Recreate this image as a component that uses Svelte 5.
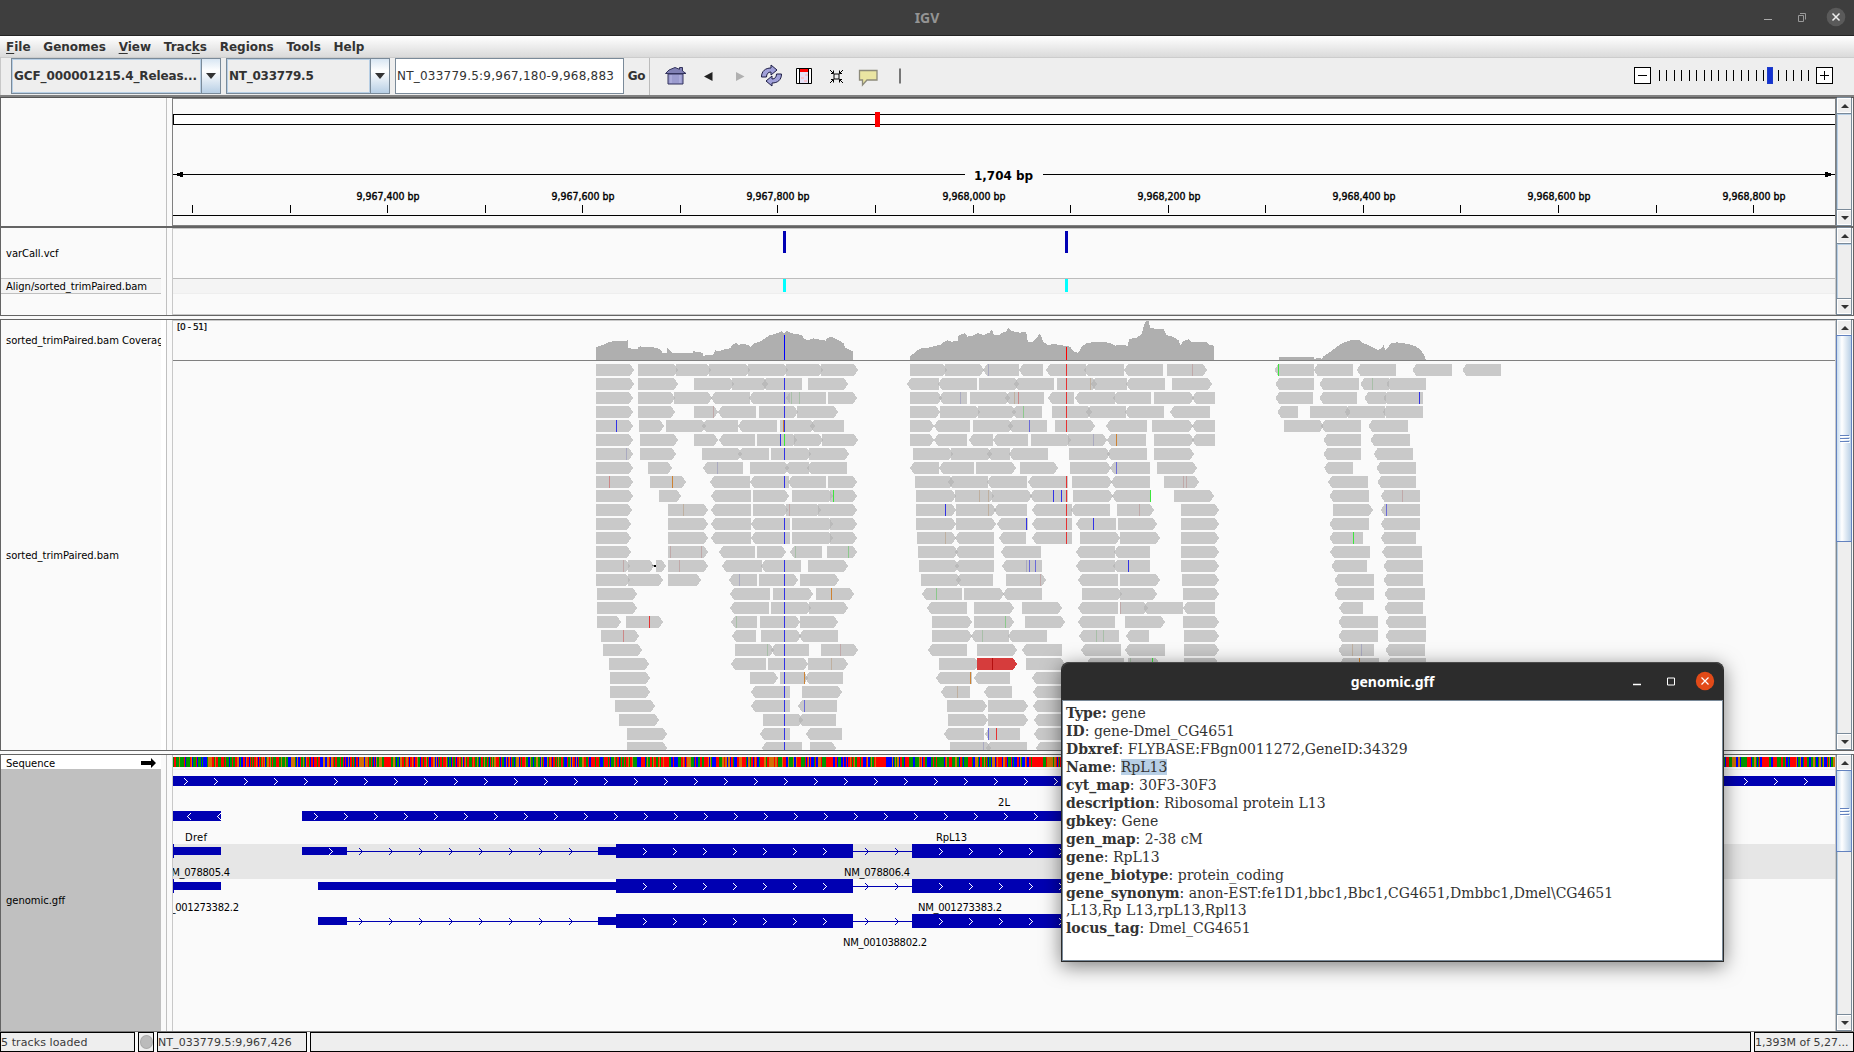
<script>
  // Alignment rows: "start>tip" is a forward read, "tip<end" a reverse read.
  const groups = [
    {
      origin: 580, scale: 3,
      rows: [
        '48>162 174>294 288>393 387>510 504>624 618>729 723>834',
        '48>162 174>294 342>462 456>564 546<666 684>804',
        '48>159 174>285 282>396 393<510 507<630 618<738 744>831',
        '48>159 174>285 342>414 414<528 537>654 651>774',
        '48>159 177>252 258>378 366<474 474<591 600>705 690<792',
        '48>159 180>294 342>414 417<525 531>651 642>729 726>834',
        '48>159 180>288 366>486 474<567 573>693 687>807',
        '48>159 204>276 369<489 510>627 615<687 681<801',
        '48>159 210>318 390<510 510<627 624<738 744>831',
        '48>159 237>303 393<513 519>627 636>759 750>831',
        '48>156 264>384 393<513 519>624 618>723 714>831',
        '48>153 264>384 393<513 513<630 636>759 750>831',
        '48>153 264>384 393<513 513<630 636>759 750>831',
        '48>153 264>384 417<525 531>618 630<726 741>831',
        '48>150 144>222 228>258 264>384 426<546 543<663 684>804',
        '48>150 144>249 264>363 447<531 537>654 660>777',
        '51>171 450<570 579>699 708>822',
        '51>171 450<567 573>693 687>804',
        '51>123 138>249 453<531 540>660 660>774',
        '63>177 456<528 543>663 657<774',
        '69>186 465>582 573<687 723>834',
        '87>207 453<558 564>684 684>804',
        '90>210 510>594 600>684 675<789',
        '90>210 513<630 666>786',
        '105>225 513<630 654<771',
        '117>237 549>669 655<768',
        '141>261 540<630 678<786',
        '141>261 546<666 690>768'
      ],
      snps: '1:613B 2:613B 2:634h 2:658h 3:613B 3:400p 4:109B 4:610O 4:613B 5:601B 5:613G 6:139v 6:613B 7:412v 8:88r 8:277O 8:613B 9:760G 10:310o 10:628p 11:613B 12:613B 13:271p 13:364p 13:646h 13:805g 14:130p 14:298p 14:613B 15:478v 15:613B 16:613B 16:754O 17:613B 18:208R 18:469h 18:613B 19:130r 19:613B 20:562h 20:613B 20:781p 21:613B 21:754o 22:613B 22:673O 23:613B 24:613B 24:673b 25:613B 26:613B 27:613B',
      coverY: 315,
      cover: '48,135 48,98 55,93 70,90 80,84 90,81 100,78 135,79 143,75 144,97 158,103 172,103 174,97 182,94 195,97 210,96 225,98 240,102 248,115 261,115 261,99 268,104 278,113 300,113 338,113 339,108 352,111 368,113 369,123 378,120 390,121 402,118 405,106 420,108 435,103 450,100 459,88 470,84 474,90 490,86 504,90 512,95 522,86 540,80 552,72 570,60 585,57 600,52 606,48 612,55 620,48 627,52 640,56 667,60 669,69 684,76 700,70 720,74 738,77 740,70 750,66 760,68 775,76 790,84 795,98 805,103 818,108 819,135'
    },
    {
      origin: 890, scale: 3,
      rows: [
        '60>171 165>282 279<387 387<459 468<588 582<702 702<819 831>951',
        '51<147 144<261 267>387 372<492 501>621 603<712 708<825 846>966',
        '60>156 147<231 240>360 345<462 474<552 555<675 669<783 792>912 906<975',
        '60>150 150>270 264>378 366<456 486>606 588<708 705<822 840<960',
        '60>132 132<240 249>369 354<471 495>615 648<771 786>909 906<975',
        '60>132 132<231 237<309 309<414 423>543 534>651 651<768 792>912 906<975',
        '69>189 183>306 291<360 357<474 537>660 651<771 792>912',
        '60<147 147<252 258>378 390>504 540>663 660<780 801>921',
        '75>192 174<294 291<411 414<534 546>666 663<780 822>927',
        '78>198 195>312 306>426 420<534 549>669 666<782 852>972',
        '78>198 198>318 312<411 426<546 543<660 681>792 873>987',
        '78>198 198>318 321<414 426<546 558<678 684>801 873>987',
        '81>198 195<312 327<408 426<546 570>690 690>810 873>987',
        '84>204 195<312 333<453 558<675 672<780 873>987',
        '87>207 195<312 336<456 558<675 669<780 873>987',
        '93>213 198<309 348>468 564<684 690>810 876>987',
        '96<216 222>342 339<456 576>696 690>801 879>987',
        '111<231 252>372 396>516 564<684 690>774 760<879 879<975',
        '126>246 252>372 405>525 564<675 705>825 879>987',
        '126>246 243<357 354<471 567<687 708<777 882>987',
        '114<231 261>381 396<516 573<693 705<825 882>987',
        '147>267 408>525 588<702 714>810 882>987',
        '138<246 252<360 426<546',
        '153<240 282<366 429<546',
        '171>291 294>414 429<546',
        '174>294 294>414 432<550',
        '162<282 285<390 432<550',
        '180>303 288<411 438<550'
      ],
      snps: '0:529R 1:529R 2:529R 3:529R 4:529R 8:529R 9:529R 10:529R 11:529R 12:529R 0:295v 0:907p 1:601o 2:211v 2:373o 2:385r 3:400g 4:418b 5:610v 5:679O 7:679b 8:880p 8:889p 9:268o 9:295o 9:490B 9:514B 9:781G 10:166B 10:295o 10:748p 11:409B 11:610B 12:166o 14:409v 14:418b 14:436b 14:715B 15:451p 16:139g 17:691p 18:346g 19:277h 19:619h 19:640h 21:720h 21:787G 22:241O 23:202o 26:295b 26:319R 27:280v',
      coverY: 315,
      cover: '60,135 60,123 70,117 80,107 95,100 120,97 140,92 150,90 160,81 172,76 186,80 204,78 206,60 225,55 232,65 250,61 264,54 280,60 300,52 306,42 312,60 326,60 335,55 350,48 354,38 365,48 378,51 390,53 408,50 414,82 430,80 440,68 450,56 460,80 474,91 490,87 510,90 525,93 540,95 552,111 565,113 575,95 590,85 610,81 640,81 660,84 675,92 690,90 714,92 717,72 740,68 755,58 765,20 776,18 780,38 800,42 820,42 830,60 850,66 865,75 872,92 880,78 895,73 905,80 950,81 957,90 971,92 971,135'
    },
    {
      origin: 1240, scale: 2.554,
      rows: [
        '88<189 188<289 298<398 440<541 568<667',
        '90<189 203<304 307<380 374<475',
        '90<186 203<299 318<373 366<467',
        '95<148 179>283 267<370 364<467',
        '112>214 207<309 328<429',
        '213<309 333<434',
        '213<309 341<442',
        '215<289 348<449',
        '225<327 351<449',
        '228<329 359<460',
        '237>340 359<460',
        '228<329 359<460',
        '228<314 359<449',
        '230<332 363<465',
        '233<324 366<467',
        '241<342 366<467',
        '241<342 369<472',
        '253<314 369<467',
        '251<352 371<475',
        '251<352 371<475',
        '251<342 371<472',
        '254<355 373<475'
      ],
      snps: '0:98G 1:338h 2:458B 9:415p 10:374b 12:290G 20:287o 20:310v 21:305O',
      coverY: 340,
      cover: '100,60 100,51 188,51 189,58 198,54 210,56 213,49 225,40 240,27 260,10 280,2 285,-1 306,-1 312,8 325,14 340,22 352,30 362,24 366,15 372,32 385,10 400,7 430,12 450,20 462,30 470,45 474,58 474,60'
    }
  ];

  const snpColors = {
    B: '#3232e6', b: '#6a6ad8', v: '#aaaac0', R: '#e63232', r: '#cc8888', p: '#c0a9a9',
    G: '#3ce63c', g: '#8cc88c', h: '#a8bfa8', O: '#cd8232', o: '#bfb0a0'
  };

  const rowTop = (i) => 364 + 14 * i;

  function readPath(a, dir, b, y) {
    const w = Math.min(4, (b - a) / 2);
    return dir === '>'
      ? `M${a} ${y}H${b - w}L${b} ${y + 6}L${b - w} ${y + 12}H${a}Z`
      : `M${b} ${y}H${a + w}L${a} ${y + 6}L${a + w} ${y + 12}H${b}Z`;
  }

  const reads = groups.flatMap((g) =>
    g.rows.flatMap((row, i) =>
      row.split(' ').map((r) => {
        const [, a, dir, b] = r.match(/(\d+)([<>])(\d+)/);
        return readPath(g.origin + a / g.scale, dir, g.origin + b / g.scale, rowTop(i));
      })
    )
  );

  const snps = groups.flatMap((g) =>
    g.snps.split(' ').map((s) => {
      const [, row, x, c] = s.match(/(\d+):(\d+)(\w)/);
      return { x: Math.floor(g.origin + x / g.scale), y: rowTop(+row), color: snpColors[c] };
    })
  );

  const covers = groups.map((g) =>
    g.cover
      .split(' ')
      .map((p) => {
        const [x, y] = p.split(',').map(Number);
        return `${g.origin + x / g.scale},${g.coverY + y / 3}`;
      })
      .join(' ')
  );

  const rulerTicks = Array.from({ length: 17 }, (_, i) => ({
    x: Math.floor(192.5 + 97.57 * i),
    label: i % 2 === 0 && i > 0 ? `9,96${i < 8 ? 7 : 8},${((i * 100 + 200) % 1000)} bp`.replace(',0 bp', ',000 bp') : ''
  }));

  // Nucleotide strip: pseudo-random bases with short homopolymer runs.
  const baseColors = ['#009600', '#d17105', '#0000ff', '#ff0000'];
  let seed = 4651;
  const random = () => {
    seed = (seed * 48271) % 2147483647;
    return seed / 2147483647;
  };
  const basePaths = ['', '', '', ''];
  let base = 0;
  for (let x = 173; x < 1835; x++) {
    if (random() > 0.2) {
      const r = random();
      base = r < 0.3 ? 0 : r < 0.5 ? 1 : r < 0.7 ? 2 : 3;
    }
    basePaths[base] += `M${x} 757h1v10h-1z`;
  }

  const span = (from, to) => {
    const out = [];
    for (let x = from; x <= to; x += 30) out.push(x);
    return out;
  };
  const chevrons = (xs, y, d = 1) =>
    xs.map((x) => (d > 0 ? `M${x} ${y - 3}l3.5 3.5l-3.5 3.5` : `M${x + 4} ${y - 3}l-3.5 3.5l3.5 3.5`)).join('');

  const transcripts = [
    { y: 851, thin: [[173, 221], [302, 347], [598, 616]], intron: true, start: [329] },
    { y: 886, thin: [[173, 221], [318, 616]], intron: false, start: [] },
    { y: 921, thin: [[318, 347], [598, 616]], intron: true, start: [] }
  ];

  const geneLabels = [
    [998, 806, '2L', 12], [185, 841, 'Dref', 22], [936, 841, 'RpL13', 31],
    [164, 876, 'NM_078805.4', 66], [844, 876, 'NM_078806.4', 66],
    [155, 911, 'NM_001273382.2', 84], [918, 911, 'NM_001273383.2', 84], [843, 946, 'NM_001038802.2', 84]
  ];

  const menus = [['F', 'ile', ''], ['', 'Genomes', ''], ['V', 'iew', ''], ['k', 's', 'Trac'], ['', 'Regions', ''], ['', 'Tools', ''], ['', 'Help', '']];

  const feature = [
    ['ID', 'gene-Dmel_CG4651'], ['Dbxref', 'FLYBASE:FBgn0011272,GeneID:34329'], ['Name', 'RpL13'],
    ['cyt_map', '30F3-30F3'], ['description', 'Ribosomal protein L13'], ['gbkey', 'Gene'],
    ['gen_map', '2-38 cM'], ['gene', 'RpL13'], ['gene_biotype', 'protein_coding'],
    ['gene_synonym', 'anon-EST:fe1D1,bbc1,Bbc1,CG4651,Dmbbc1,Dmel\\CG4651'],
    ['', ',L13,Rp L13,rpL13,Rpl13'], ['locus_tag', 'Dmel_CG4651']
  ];
</script>

{#snippet scrollbar(thumb)}
  <div class="scroll">
    <div class="sbtn"><svg width="8" height="4" viewBox="0 0 8 4"><path d="M0 4L4 0L8 4Z" fill="#333" /></svg></div>
    <div class="strack">
      {#if thumb}
        <div class="thumb" style:height="{thumb}px"><i></i><i></i><i></i></div>
      {/if}
    </div>
    <div class="sbtn down"><svg width="8" height="4" viewBox="0 0 8 4"><path d="M0 0L4 4L8 0Z" fill="#333" /></svg></div>
  </div>
{/snippet}

{#snippet combo(text, cls)}
  <div class="combo {cls}">
    <span class="ctext">{text}</span>
    <span class="cbtn"><svg width="10" height="6" viewBox="0 0 10 6"><path d="M0 0H10L5 6Z" fill="#333" /></svg></span>
  </div>
{/snippet}

<div class="app">
  <header class="titlebar">
    <span class="tside"></span>
    <span class="wtitle">IGV</span>
    <span class="tside right">
      <svg width="98" height="36" viewBox="1756 0 98 36">
        <path d="M1764 19.5h8" stroke="#aaa" />
        <path d="M1798.5 15.5h5v6h-5zM1800 13.5h5.5v6" fill="none" stroke="#999" />
        <circle cx="1836" cy="17" r="9.3" fill="#5a5a5a" />
        <path d="M1832.5 13.5l7 7m0-7l-7 7" stroke="#eee" stroke-width="1.5" />
      </svg>
    </span>
  </header>

  <nav class="menubar">
    {#each menus as [u, rest, pre]}
      <span>{pre}{#if u}<u>{u}</u>{/if}{rest}</span>
    {/each}
  </nav>

  <div class="toolbar">
    {@render combo('GCF_000001215.4_Releas...', 'genome')}
    {@render combo('NT_033779.5', 'chrom')}
    <div class="field"><span>NT_033779.5:9,967,180-9,968,883</span></div>
    <div class="go">Go</div>
    <svg class="icons" width="260" height="38" viewBox="655 57 260 38">
      <path d="M668 74h15v10h-15z" fill="#9c9ccf" stroke="#33335c" />
      <path d="M665.5 73.5L669 70l6-2.5 4.5 1.8V67.500h3v3.500l3.500 2.500z" fill="#8080b4" stroke="#33335c" />
      <path d="M671 75v8M680 75v8" stroke="#b8b8e4" />
      <path d="M704 76.500l8.500-4.500v9z" fill="#222" />
      <path d="M744.500 76.500l-8.500-4.500v9z" fill="#b0b0b0" />
      <g fill="#a0a0d8" stroke="#1d1d45" stroke-width="1">
        <path d="M761.500 77c0-6 4-9 9.500-9v-3l6 5-6 5v-3c-3 0-4.500 2-4.500 5z" />
        <path d="M781.500 74c0 6-4 9-9.500 9v3l-6-5 6-5v3c3 0 4.500-2 4.500-5z" />
      </g>
      <path d="M796.500 68.500h15v15h-15z" fill="#fff" stroke="#000" />
      <path d="M800 72h9v11h-9z" fill="#e4e0f6" />
      <path d="M801 77h3v2h-3zM805 74h3v2h-3zM804 80h3v2h-3z" fill="#f7c3cf" />
      <path d="M800 69h8v3h-8z" fill="#f00" />
      <path d="M799.500 68v16M808.500 68v16" stroke="#000" />
      <g fill="none" stroke="#000">
        <path d="M834 74h5v5h-5z" />
        <path d="M830 70l3.500 3.500M843 70l-3.500 3.500M830 83l3.500-3.500M843 83l-3.500-3.500M831 73.500h2.500v-3M842 73.500h-2.500v-3M831 79.500h2.500v3M842 79.500h-2.500v3" />
      </g>
      <path d="M859.500 70.500h17.500v9.500h-10l-4.500 5v-5h-3z" fill="#eae5a2" stroke="#8d8b7a" stroke-width="1.300" />
      <path d="M900 68.500v15" stroke="#777" stroke-width="2" />
    </svg>
    <svg class="zoomer" width="204" height="38" viewBox="1632 57 204 38" shape-rendering="crispEdges">
      <path d="M1634.500 67.500h16v16h-16zM1816.500 67.500h16v16h-16z" fill="#fff" stroke="#000" />
      <path d="M1638 75.500h9M1820 75.500h9M1824.500 71v9" stroke="#000" />
      {#each Array.from({ length: 21 }) as _, i}
        <path d="M{Math.floor(1659.3 + 7.46 * i) + 0.5} 70v11" stroke="#000" />
      {/each}
      <path d="M1767.500 67.500h5v16h-5z" fill="#1432d2" stroke="#1e3cc8" />
    </svg>
  </div>

  <div class="sep top"></div>

  <section class="panel ruler">
    <div class="names"></div>
    <div class="gutter"></div>
    <svg class="data dark" width="1662" height="126" viewBox="173 99 1662 126" shape-rendering="crispEdges">
      <path d="M173.500 114.500H1836V124.500H173.500Z" fill="#fff" stroke="#000" />
      <path d="M875 112h5v15h-5z" fill="#f00" />
      <path d="M173 174.500H965M1043 174.500H1835M173 215.500H1835" stroke="#000" />
      <path d="M177 173h3v-1h3v5h-3v-1h-3zM1831 173h-3v-1h-3v5h3v-1h3z" />
      <text x="1003.500" y="180" class="span" textLength="59" lengthAdjust="spacingAndGlyphs" text-anchor="middle">1,704 bp</text>
      {#each rulerTicks as t}
        <path d="M{t.x + 0.5} 205v8" stroke="#000" />
        {#if t.label}<text x={t.x + 1} y="200" class="tick" textLength="63" lengthAdjust="spacingAndGlyphs" text-anchor="middle">{t.label}</text>{/if}
      {/each}
    </svg>
    {@render scrollbar(0)}
  </section>

  <div class="sep thick"></div>

  <section class="panel variants">
    <div class="names">
      <div class="vcf">varCall.vcf</div>
      <div class="sample">Align/sorted_trimPaired.bam</div>
    </div>
    <div class="gutter"></div>
    <svg class="data" width="1662" height="85" viewBox="173 229 1662 85" shape-rendering="crispEdges">
      <path d="M173 279H1835V293H173Z" fill="#f4f4f4" />
      <path d="M173 278.500H1835" stroke="#bcbcbc" />
      <path d="M173 293.500H1835" stroke="#eee" />
      <path d="M783 231h3v22h-3zM1065 231h3v22h-3z" fill="#0000b4" />
      <path d="M783 279h3v13h-3zM1065 279h3v13h-3z" fill="#00ffff" />
    </svg>
    {@render scrollbar(0)}
  </section>

  <div class="sep gap"></div>

  <section class="panel reads">
    <div class="names">
      <div class="cov">sorted_trimPaired.bam Coverage</div>
      <div class="bam">sorted_trimPaired.bam</div>
    </div>
    <div class="gutter white"></div>
    <svg class="data" width="1662" height="429" viewBox="173 321 1662 429" shape-rendering="crispEdges">
      <text x="177" y="330" class="range" textLength="30">[0 - 51]</text>
      {#each covers as points}<polygon {points} fill="#afafaf" />{/each}
      <path d="M784 335h1v25h-1z" fill="#0000ff" />
      <path d="M1066 347h1v13h-1z" fill="#ff0000" />
      <path d="M173 360.500H1835" stroke="#808080" />
      {#each reads as d}<path {d} class="read" />{/each}
      <path d="M977 658H1013L1017 664L1013 670H977Z" fill="#d63c3c" />
      <path d="M992 658h1v12h-1z" fill="#b40f0f" />
      {#each snps as s}<rect x={s.x} y={s.y} width="1" height="12" fill={s.color} />{/each}
      <path d="M652 565.500h2" stroke="#888" stroke-width="1" />
      <path d="M654 565h2v2h-2z" />
    </svg>
    {@render scrollbar(207)}
  </section>

  <div class="sep gap"></div>

  <section class="panel genes">
    <div class="names">
      <div class="seq">
        <span>Sequence</span>
        <svg width="15" height="10" viewBox="0 0 15 10"><path d="M0 3h10V0l5 5-5 5V7H0z" /></svg>
      </div>
      <div class="gff">genomic.gff</div>
    </div>
    <div class="gutter"></div>
    <svg class="data" width="1662" height="276" viewBox="173 755 1662 276" shape-rendering="crispEdges">
      {#each basePaths as d, i}<path {d} fill={baseColors[i]} />{/each}
      <path d="M173 769.500H1835" stroke="#f0f0f0" />
      <path d="M173 844H1835V879H173Z" fill="#e6e6e6" />
      <g fill="#0000b2">
        <path d="M173 776H1835V786H173Z" />
        <path d="M173 811H221V821H173ZM302 811H1200V821H302Z" />
        {#each transcripts as t}
          {#each t.thin as [a, b]}<path d="M{a} {t.y - 4}H{b}v8H{a}Z" />{/each}
          <path d="M616 {t.y - 7}H853v14H616ZM912 {t.y - 7}H1200v14H912Z" />
        {/each}
        <path d="M173 844h1v14h-1zM173 879h1v14h-1z" />
      </g>
      <g fill="none" stroke="#0000b2">
        {#each transcripts as t}
          <path d="M853 {t.y + 0.5}H912{chevrons([865, 895], t.y)}" />
          {#if t.intron}<path d="M347 {t.y + 0.5}H598{chevrons(span(359, 570), t.y)}" />{/if}
        {/each}
      </g>
      <g fill="none" stroke="#fff">
        <path d={chevrons(span(184, 1830), 781)} />
        <path d={chevrons([187, 217], 816, -1)} />
        <path d={chevrons(span(314, 1070), 816)} />
        {#each transcripts as t}
          <path d={chevrons([...t.start, ...span(643, 824), ...span(939, 1060)], t.y)} />
        {/each}
      </g>
      {#each geneLabels as [x, y, label, len]}
        <text {x} {y} class="glabel" textLength={len}>{label}</text>
      {/each}
    </svg>
    {@render scrollbar(82)}
  </section>

  <footer class="status">
    <div class="box loaded">5 tracks loaded</div>
    <div class="box led"><i></i></div>
    <div class="box locus">NT_033779.5:9,967,426</div>
    <div class="box message"></div>
    <div class="box memory">1,393M of 5,27...</div>
  </footer>

  <div class="popup">
    <div class="ptitle">
      <span>genomic.gff</span>
      <svg width="97" height="38" viewBox="1626 662 97 38">
        <path d="M1633 684.500h8" stroke="#fff" stroke-width="1.500" />
        <path d="M1667.500 678h7v7h-7z" fill="none" stroke="#fff" />
        <circle cx="1705" cy="681" r="9.200" fill="#e24a18" />
        <path d="M1701.500 677.500l7 7m0-7l-7 7" stroke="#fff" stroke-width="1.200" />
      </svg>
    </div>
    <div class="pbody">
      <div><b>Type:</b> gene</div>
      {#each feature as [key, value]}
        <div class:wrapped={!key}>
          {#if key}<b>{key}</b>:{' '}{/if}{#if key === 'Name'}<mark>{value}</mark>{:else}{value}{/if}
        </div>
      {/each}
    </div>
  </div>
</div>

<style>
  :global(body) { margin: 0; overflow: hidden; }
  .app {
    position: relative; width: 1854px; height: 1052px; display: flex; flex-direction: column;
    background: #fafafa; font-family: "DejaVu Sans", sans-serif; font-size: 12px; color: #333; overflow: hidden;
  }
  .app * { box-sizing: border-box; }
  svg { display: block; flex: none; }
  .titlebar {
    height: 36px; flex: none; display: flex; align-items: center; background: #3e3e3e; border-bottom: 1px solid #242424;
  }
  .tside { flex: 1; display: flex; }
  .right { justify-content: flex-end; }
  .wtitle { font: bold 14px/36px "Noto Sans", sans-serif; color: #949494; }

  .menubar {
    height: 21px; flex: none; display: flex; gap: 12.75px; padding: 0 6px; font-weight: bold; line-height: 22px;
    background: linear-gradient(#fff, #dadada);
  }
  .menubar u { text-underline-offset: 2px; }
  .toolbar {
    height: 38px; flex: none; display: flex; align-items: flex-start; background: #eee; padding: 1px 0 0 10px;
    border-left: 1px solid #c8c8c8; box-shadow: inset 0 1px #ccc;
  }
  .combo {
    height: 36px; display: flex; flex: none; border: 1px solid #7a8a99; font-weight: bold; line-height: 34px; white-space: nowrap;
    margin-right: 5px;
  }
  .genome { width: 210px; letter-spacing: -0.1px; }
  .chrom { width: 164px; letter-spacing: -0.25px; }
  .ctext { flex: 1; border: 1px solid #b8cfe5; padding-left: 1px; line-height: 32px; overflow: hidden; }
  .cbtn {
    width: 19px; border-left: 1px solid #7a8a99; display: flex; align-items: center; justify-content: center;
    background: linear-gradient(#d8e6f3, #fff 35%, #b8cfe5);
  }
  .field {
    width: 229px; height: 36px; flex: none; background: #fff; border: 1px solid #7a8a99; padding-left: 1px;
    line-height: 34px; letter-spacing: 0.23px; white-space: nowrap;
  }
  .go {
    width: 26px; height: 37px; line-height: 37px; font-weight: bold; text-align: center; border-right: 1px solid #bbb;
    letter-spacing: -0.3px;
  }
  .icons, .zoomer { margin-top: -1px; }
  .icons { margin-left: 5px; }
  .zoomer { margin-left: auto; margin-right: 18px; }

  .sep { flex: none; }
  .top { height: 3px; background: #808080; border-bottom: 1px solid #555; }
  .thick { height: 2px; background: #646464; }
  .gap { height: 5px; border: solid #646464; border-width: 1px 0; }

  .panel { flex: none; display: flex; border: solid #646464; border-width: 0 1px; }
  .ruler { height: 128px; }
  .variants { height: 87px; }
  .reads { height: 430px; }
  .genes { height: 276px; }
  .names {
    width: 160px; flex: none; display: flex; flex-direction: column; font-size: 10px; line-height: 12px; color: #000;
    white-space: nowrap; overflow: hidden; letter-spacing: -0.04px;
  }
  .gutter { width: 6px; flex: none; border-right: 1px solid #c0c0c0; }
  .white { background: #fff; }
  .gutter + .data { margin-left: 5px; }
  .data { box-sizing: content-box !important; border: 1px solid #c8c8c8; overflow: hidden; }
  .ruler .data { border-color: #808080; }
  .reads .data { border-bottom: 0; }
  .genes .data { border-top: 0; border-bottom: 0; }
  .vcf { height: 50px; padding: 20px 0 0 5px; }
  .sample { height: 16px; padding: 2px 0 0 5px; background: #f4f4f4; border: solid #c0c0c0; border-width: 1px 0; }
  .cov { height: 222px; padding: 15px 0 0 5px; }
  .bam { padding: 8px 0 0 5px; }
  .seq { height: 14px; flex: none; display: flex; justify-content: space-between; padding: 3px 5px 0 5px; background: #fff; line-height: 12px; }
  .gff { flex: 1; display: flex; align-items: center; padding: 1px 0 0 5px; background: #c0c0c0; }

  .scroll {
    flex: 1; display: flex; flex-direction: column; border: solid #7a8a99; border-width: 0 1px; margin-right: 1px;
    padding-bottom: 1px; background: #eee;
  }
  .sbtn { height: 15px; flex: none; display: flex; align-items: center; justify-content: center; border: 1px solid #fff; border-right: 0; box-shadow: 0 1px #7a8a99, 0 -1px #7a8a99; }
  .strack { flex: 1; margin-top: 1px; box-shadow: inset 1px 1px #b8cfe5; }
  .thumb {
    display: flex; flex-direction: column; align-items: center; justify-content: center; gap: 2px; margin: -1px -1px 0;
    border: 1px solid #6382bf; background: linear-gradient(90deg, #c8dcef, #fff 35%, #b8cfe5);
  }
  .thumb i { width: 9px; height: 1px; background: #6382bf; box-shadow: 1px 1px #fff; }

  text { font-family: "DejaVu Sans", sans-serif; fill: #000; }
  .span { font-size: 12.5px; font-weight: bold; }
  .tick { font-size: 10px; stroke: #000; stroke-width: 0.4px; }
  .range { font-size: 9px; stroke: #000; stroke-width: 0.2px; }
  .glabel { font-size: 10px; }
  .read { fill: #b3b3b3; fill-opacity: 0.7; }

  .status { flex: none; height: 21px; border-top: 1px solid #777; display: flex; gap: 3px; background: #fafafa; }
  .box {
    height: 20px; border: 1px solid #000; background: #eee; font-size: 11px; line-height: 20px; color: #3a3a3a;
    white-space: nowrap; overflow: hidden;
  }
  .loaded { width: 135px; letter-spacing: 0.1px; }
  .led { width: 16px; display: flex; align-items: center; justify-content: center; }
  .led i { width: 13px; height: 14px; border-radius: 50%; background: #bbb; border: 1px solid #aaa; }
  .locus { width: 150px; letter-spacing: 0.06px; }
  .message { flex: 1; }
  .memory { width: 100px; }

  .popup {
    position: absolute; left: 1061px; top: 662px; width: 663px; height: 300px; display: flex; flex-direction: column;
    border-radius: 8px 8px 0 0; background: #2c2c2c; padding: 0 1px 1px; box-shadow: 0 4px 20px rgba(0, 0, 0, 0.5);
  }
  .ptitle {
    height: 38px; flex: none; display: flex; align-items: center; border-radius: 8px 8px 0 0; box-shadow: inset 0 1px #4a4a4a;
    color: #fff; font: bold 14px "Noto Sans", sans-serif;
  }
  .ptitle span { flex: 1; text-align: center; padding-left: 97px; }
  .pbody {
    flex: 1; background: #fff; border: 1px solid #7a8a99; padding: 3px 3px; font: 14px/18px "DejaVu Serif", serif;
    color: #333; white-space: nowrap;
  }
  .pbody div { height: 18px; }
  .pbody .wrapped { margin-top: -1px; }
  mark { background: #b8cfe5; color: inherit; }
</style>
